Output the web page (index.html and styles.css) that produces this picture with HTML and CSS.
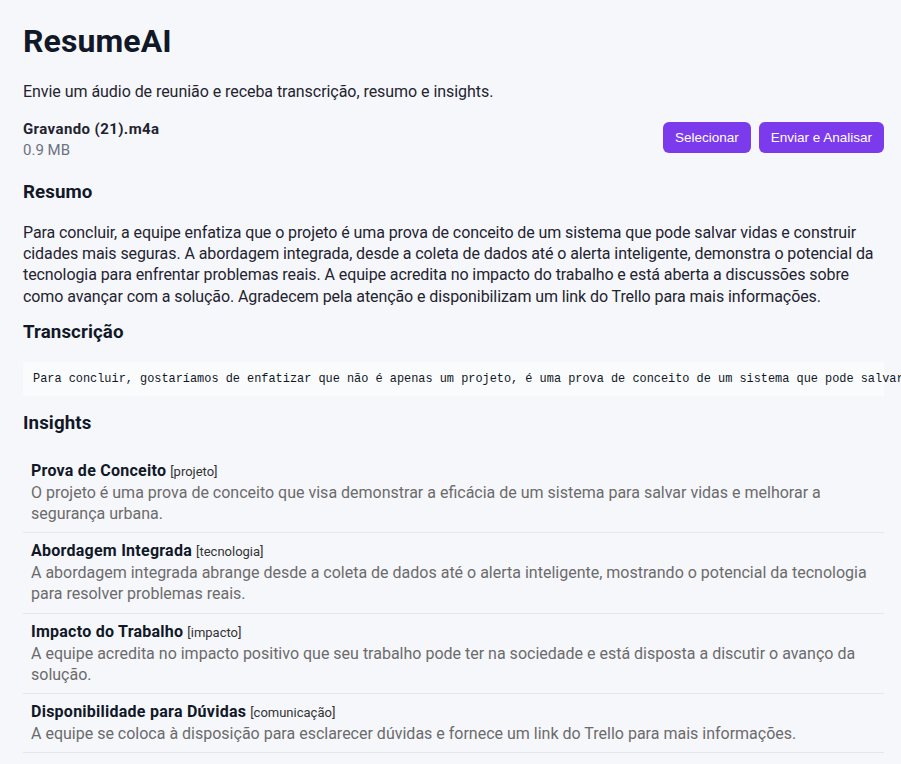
FILE: index.html
```html
<!DOCTYPE html>
<html lang="pt-BR">
<head>
<meta charset="utf-8">
<title>ResumeAI</title>
<link rel="stylesheet" href="styles.css">
</head>
<body>
<div class="page">
  <h1 class="title">ResumeAI</h1>
  <p class="subtitle">Envie um áudio de reunião e receba transcrição, resumo e insights.</p>

  <div class="file-row">
    <div class="file-info">
      <div class="file-name">Gravando (21).m4a</div>
      <div class="file-size">0.9 MB</div>
    </div>
    <div class="actions">
      <button class="btn">Selecionar</button>
      <button class="btn">Enviar e Analisar</button>
    </div>
  </div>

  <h3 class="section-title section-resumo">Resumo</h3>
  <p class="summary">Para concluir, a equipe enfatiza que o projeto é uma prova de conceito de um sistema que pode salvar vidas e construir cidades mais seguras. A abordagem integrada, desde a coleta de dados até o alerta inteligente, demonstra o potencial da tecnologia para enfrentar problemas reais. A equipe acredita no impacto do trabalho e está aberta a discussões sobre como avançar com a solução. Agradecem pela atenção e disponibilizam um link do Trello para mais informações.</p>

  <h3 class="section-title section-transcricao">Transcrição</h3>
  <pre class="transcript">Para concluir, gostaríamos de enfatizar que não é apenas um projeto, é uma prova de conceito de um sistema que pode salvar vidas e construir cidades mais seguras.</pre>

  <h3 class="section-title section-insights">Insights</h3>
  <ul class="insights">
    <li class="insight">
      <div class="insight-head"><strong class="insight-title">Prova de Conceito</strong> <span class="insight-tag">[projeto]</span></div>
      <div class="insight-desc">O projeto é uma prova de conceito que visa demonstrar a eficácia de um sistema para salvar vidas e melhorar a segurança urbana.</div>
    </li>
    <li class="insight">
      <div class="insight-head"><strong class="insight-title">Abordagem Integrada</strong> <span class="insight-tag">[tecnologia]</span></div>
      <div class="insight-desc">A abordagem integrada abrange desde a coleta de dados até o alerta inteligente, mostrando o potencial da tecnologia para resolver problemas reais.</div>
    </li>
    <li class="insight">
      <div class="insight-head"><strong class="insight-title">Impacto do Trabalho</strong> <span class="insight-tag">[impacto]</span></div>
      <div class="insight-desc">A equipe acredita no impacto positivo que seu trabalho pode ter na sociedade e está disposta a discutir o avanço da solução.</div>
    </li>
    <li class="insight">
      <div class="insight-head"><strong class="insight-title">Disponibilidade para Dúvidas</strong> <span class="insight-tag">[comunicação]</span></div>
      <div class="insight-desc">A equipe se coloca à disposição para esclarecer dúvidas e fornece um link do Trello para mais informações.</div>
    </li>
  </ul>
</div>
</body>
</html>
```
FILE: styles.css
```css
html, body {
  margin: 0;
  padding: 0;
  background: #f6f7fb;
}

body {
  font-family: Roboto, "Liberation Sans", sans-serif;
  font-size: 16px;
  line-height: 1.33;
  color: #1f2430;
  overflow: hidden;
}

.page {
  padding: 20px 17px 0 23px;
  overflow: hidden;
}

.title {
  margin: 0;
  font-size: 32px;
  font-weight: 700;
  color: #111827;
  line-height: 1.33;
  letter-spacing: 0.1px;
}

.subtitle {
  margin: 18px 0 0;
  color: #1f2430;
  letter-spacing: -0.05px;
}

.file-row {
  display: flex;
  align-items: flex-start;
  justify-content: space-between;
  margin-top: 17px;
}

.file-name {
  font-size: 15px;
  line-height: 21px;
  font-weight: 700;
  letter-spacing: 0.4px;
  color: #1f2430;
}

.file-size {
  font-size: 15px;
  line-height: 21px;
  color: #6b7280;
}

.actions {
  display: flex;
  gap: 8px;
  margin-top: 3px;
}

.btn {
  font-family: "Liberation Sans", Arial, sans-serif;
  font-size: 13.5px;
  line-height: 15px;
  color: #ffffff;
  background: #7c3aed;
  border: none;
  border-radius: 6px;
  padding: 8px 12px;
}

.section-title {
  margin: 0;
  font-size: 18.72px;
  font-weight: 700;
  color: #111827;
  letter-spacing: 0.1px;
}

.section-resumo { margin-top: 19px; }
.section-transcricao { margin-top: 13px; }
.section-insights { margin-top: 15px; }

.summary {
  margin: 17px 0 0;
  color: #1f2430;
  letter-spacing: -0.09px;
}

.transcript {
  margin: 17px 0 0;
  padding: 9px 10px;
  font-family: "Liberation Mono", "DejaVu Sans Mono", monospace;
  font-size: 11.9px;
  line-height: 16px;
  color: #111827;
  background: #fafbfc;
  white-space: pre;
  overflow: visible;
}

.insights {
  list-style: none;
  margin: 17px 0 0;
  padding: 0;
}

.insight {
  padding: 8px;
  border-bottom: 1px solid #e6e7eb;
}

.insight-head {
  line-height: 20px;
}

.insight-title {
  font-size: 16px;
  font-weight: 700;
  letter-spacing: 0.25px;
  color: #111827;
}

.insight-tag {
  font-size: 13px;
  color: #333;
}

.insight-desc {
  color: #6b6b6b;
}
```
